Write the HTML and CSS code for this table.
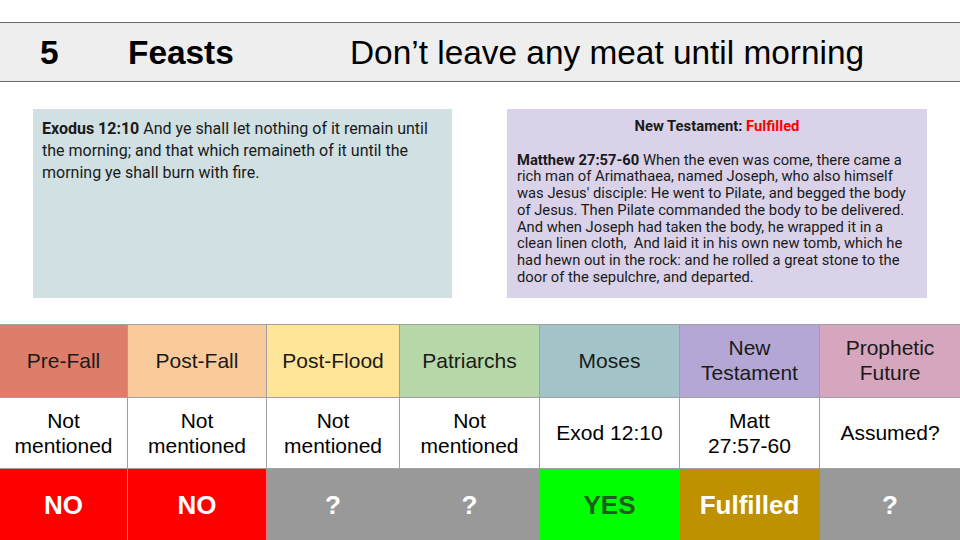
FILE: index.html
```html
<!DOCTYPE html>
<html>
<head>
<meta charset="utf-8">
<link rel="stylesheet" href="styles.css">
</head>
<body>
<header class="title-bar">
  <span class="num">5</span>
  <span class="topic">Feasts</span>
  <span class="subtitle">Don’t leave any meat until morning</span>
</header>
<section class="boxes">
  <div class="box box-ot">
    <p><b>Exodus 12:10</b> And ye shall let nothing of it remain until the morning; and that which remaineth of it until the morning ye shall burn with fire.</p>
  </div>
  <div class="box box-nt">
    <p class="nt-title">New Testament: <span class="red">Fulfilled</span></p>
    <p class="nt-body"><b>Matthew 27:57-60</b> When the even was come, there came a rich man of Arimathaea, named Joseph, who also himself was Jesus' disciple: He went to Pilate, and begged the body of Jesus. Then Pilate commanded the body to be delivered. And when Joseph had taken the body, he wrapped it in a clean linen cloth,&nbsp; And laid it in his own new tomb, which he had hewn out in the rock: and he rolled a great stone to the door of the sepulchre, and departed.</p>
  </div>
</section>
<section class="grid">
  <div class="cell h c1">Pre-Fall</div>
  <div class="cell h c2">Post-Fall</div>
  <div class="cell h c3">Post-Flood</div>
  <div class="cell h c4">Patriarchs</div>
  <div class="cell h c5">Moses</div>
  <div class="cell h c6">New<br>Testament</div>
  <div class="cell h c7">Prophetic<br>Future</div>

  <div class="cell r">Not<br>mentioned</div>
  <div class="cell r">Not<br>mentioned</div>
  <div class="cell r">Not<br>mentioned</div>
  <div class="cell r">Not<br>mentioned</div>
  <div class="cell r">Exod 12:10</div>
  <div class="cell r">Matt<br>27:57-60</div>
  <div class="cell r">Assumed?</div>

  <div class="cell v no">NO</div>
  <div class="cell v no">NO</div>
  <div class="cell v unk">?</div>
  <div class="cell v unk">?</div>
  <div class="cell v yes">YES</div>
  <div class="cell v ful">Fulfilled</div>
  <div class="cell v unk">?</div>
</section>
</body>
</html>
```
FILE: styles.css
```css
* { box-sizing: border-box; }
html, body { margin: 0; padding: 0; background: #ffffff; }
body {
  width: 960px;
  height: 540px;
  overflow: hidden;
  font-family: "Liberation Sans", Arial, sans-serif;
  color: #000;
}
.title-bar {
  margin-top: 22px;
  height: 60px;
  background: #eeeeee;
  border-top: 1px solid #666666;
  border-bottom: 1px solid #666666;
  display: grid;
  grid-template-columns: 88px 222px auto;
  align-items: center;
  padding-left: 40px;
  font-size: 33.4px;
  line-height: 1;
  padding-top: 1px;
}
.num, .topic { font-weight: bold; }
.boxes {
  display: flex;
  justify-content: space-between;
  padding: 27px 33px 0 33px;
}
.box {
  height: 189px;
  font-family: Roboto, "Liberation Sans", sans-serif;
}
.box p { margin: 0; }
.box-ot {
  width: 419px;
  background: #d0e0e3;
  padding: 9px 9px;
  font-size: 16px;
  line-height: 22px;
  color: #1a1a1a;
}
.box-nt {
  width: 420px;
  background: #d9d2e9;
  padding: 9px 10px;
  font-size: 14.75px;
  color: #1a1a1a;
}
.box-nt .nt-title {
  text-align: center;
  font-weight: bold;
  font-size: 14.8px;
  line-height: 17.6px;
  margin-bottom: 16px;
}
.box-nt .nt-body {
  line-height: 16.75px;
}
.red { color: #ff0000; }
.grid {
  margin-top: 26px;
  display: grid;
  grid-template-columns: 128px 139px 133px 140px 140px 140px 140px;
  grid-template-rows: 73px 71px 72px;
  border-top: 1px solid #a0a0a0;
}
.cell {
  display: flex;
  align-items: center;
  justify-content: center;
  text-align: center;
  border-right: 1px solid #a0a0a0;
  border-bottom: 1px solid #a0a0a0;
  font-size: 21px;
  line-height: 25px;
}
.cell:nth-child(7n) { border-right: 0; }
.h { color: #1a1a1a; padding-bottom: 2px; }
.c1 { background: #dd7e6b; }
.c2 { background: #f9cb9c; }
.c3 { background: #ffe599; }
.c4 { background: #b6d7a8; }
.c5 { background: #a2c4c9; }
.c6 { background: #b4a7d6; }
.c7 { background: #d5a6bd; }
.r { background: #ffffff; padding-bottom: 1px; }
.v {
  font-weight: bold;
  font-size: 26px;
  border-bottom: 0;
}
.no { background: #ff0000; color: #ffffff; border-right-color: #f08080; }
.unk { background: #999999; color: #ffffff; border-right-color: #999999; }
.yes { background: #00ff00; color: #1d5e1d; border-right-color: #00ff00; }
.ful { background: #bf9000; color: #ffffff; border-right-color: #bf9000; }
```
